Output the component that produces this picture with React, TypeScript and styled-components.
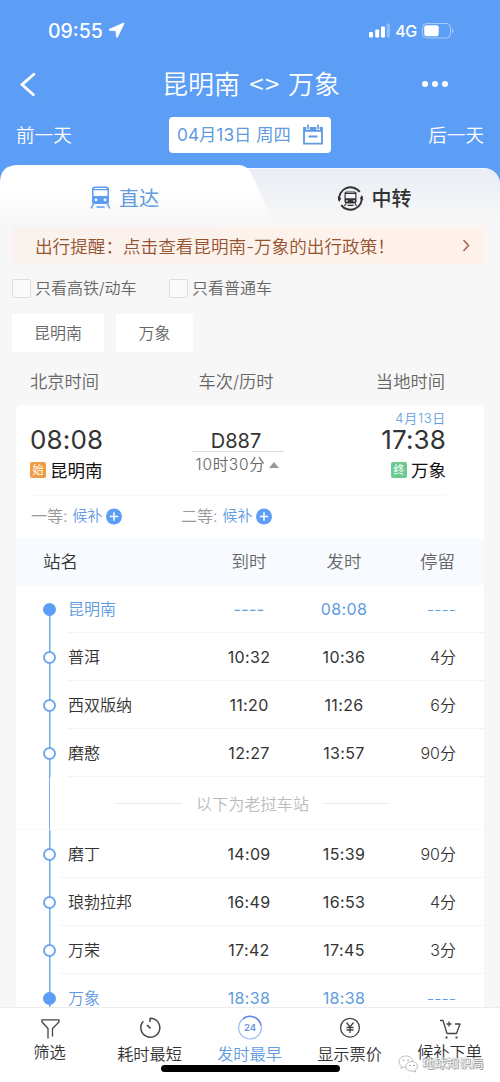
import React from "react";
import styled, { createGlobalStyle, css } from "styled-components";

const BLUE = "#5c9df5";
const LINK = "#5f9be0";

const GlobalStyle = createGlobalStyle`
  * { box-sizing: border-box; }
  body {
    margin: 0;
    background: #f7f7f7;
    font-family: Inter, "Noto Sans CJK SC", sans-serif;
    font-weight: 350;
    color: #333;
  }
`;

const Screen = styled.div`
  width: 500px;
  height: 1082px;
  display: flex;
  flex-direction: column;
  overflow: hidden;
  white-space: nowrap;
  background: #f7f7f7;
`;

const Hero = styled.header`
  height: 165px;
  flex: none;
  background: ${BLUE};
  color: #fff;
`;

const StatusBar = styled.div`
  height: 60px;
  padding: 1px 46px 0 48px;
  display: flex;
  align-items: center;
  justify-content: space-between;
`;

const StatusGroup = styled.div`
  display: flex;
  align-items: center;
  gap: 5px;
`;

const Clock = styled.span`
  font-size: 19.5px;
  font-weight: 500;
  line-height: 24px;
`;

const Network = styled.span`
  font-size: 16px;
  font-weight: 500;
  letter-spacing: -0.3px;
`;

const TitleBar = styled.div`
  height: 50px;
  padding: 0 52px 2px 19px;
  display: grid;
  grid-template-columns: 32px 1fr 26px;
  align-items: center;
`;

const Title = styled.h1`
  margin: 0 0 1px 29px;
  text-align: center;
  font-size: 26px;
  line-height: 34px;
  font-weight: 350;
`;

const Brackets = styled.span`
  font-family: "Noto Sans CJK SC", sans-serif;
  letter-spacing: 1.5px;
  margin: 0 0 0 2px;
`;

const Dots = styled.div`
  display: flex;
  gap: 4px;
  i { width: 6px; height: 6px; flex: none; border-radius: 50%; background: #fff; }
`;

const DateBar = styled.div`
  height: 50px;
  padding: 0 16px;
  display: flex;
  align-items: center;
  justify-content: space-between;
`;

const DayLink = styled.span`
  font-size: 18.6px;
  line-height: 26px;
`;

const DateButton = styled.button`
  width: 162px;
  height: 36px;
  padding: 0 7px 0 8px;
  margin: 0;
  border: 0;
  border-radius: 4px;
  background: #fff;
  color: ${LINK};
  font: 400 17.3px/36px Inter, "Noto Sans CJK SC", sans-serif;
  display: flex;
  align-items: center;
  justify-content: space-between;
`;

const Tabs = styled.nav`
  height: 62px;
  flex: none;
  display: grid;
  grid-template-columns: 250px 250px;
  background: linear-gradient(${BLUE} 30px, #f7f7f7 30px);
`;

const Tab = styled.div<{ $active?: boolean }>`
  display: flex;
  justify-content: center;
  gap: 8px;
  padding-top: 20px;
  font-size: 20px;
  line-height: 28px;
  color: #333;
  font-weight: 500;
  ${(p) =>
    p.$active
      ? css`
          width: 276px;
          z-index: 1;
          color: ${LINK};
          font-weight: 400;
          padding-right: 27px;
          background: linear-gradient(#fff 24px, #f7f7f7 55px);
          clip-path: path("M0 62V18Q0 0 18 0H238Q247 0 251 8L276 62Z");
        `
      : css`
          margin: 3px 0 0 -30px;
          padding-top: 16px;
          padding-left: 28px;
          border-top: 1px solid #f8faff;
          border-radius: 0 16px 0 0;
          background: linear-gradient(#e9edf5, #f7f7f7 52px);
        `}
`;

const Notice = styled.div`
  flex: none;
  height: 37px;
  margin: 0 15px 0 12px;
  padding: 0 15px 1px 23px;
  border-radius: 5px;
  background: linear-gradient(90deg, #faf2ee, #fff2ea);
  color: #96532f;
  font-size: 17.6px;
  display: flex;
  align-items: center;
  justify-content: space-between;
`;

const Filters = styled.div`
  flex: none;
  height: 48px;
  padding: 0 12px;
  display: flex;
  align-items: center;
`;

const Check = styled.label<{ $width: number }>`
  width: ${(p) => p.$width}px;
  display: flex;
  align-items: center;
  gap: 4px;
  font-size: 16px;
  line-height: 24px;
  color: #666;
  &::before {
    content: "";
    width: 17px;
    height: 17px;
    border: 1px solid #ddd;
    border-radius: 2px;
    background: #fafafa;
  }
`;

const Chips = styled.div`
  flex: none;
  display: flex;
  gap: 12px;
  padding: 2px 12px 0;
  height: 41px;
`;

const Chip = styled.div<{ $width: number }>`
  width: ${(p) => p.$width}px;
  height: 38px;
  background: #fff;
  color: #666;
  text-align: center;
  font-size: 16px;
  line-height: 38px;
`;

const Columns = styled.div`
  flex: none;
  height: 52px;
  padding: 5px 55px 0 30px;
  display: grid;
  grid-template-columns: 1fr 1fr 1fr;
  font-size: 17.3px;
  line-height: 48px;
  color: #666;
  span:nth-child(2) { text-align: center; padding-right: 3px; }
  span:nth-child(3) { text-align: right; }
`;

const Card = styled.main`
  flex: 1;
  min-height: 0;
  overflow: hidden;
  width: 468px;
  margin-left: 16px;
  border-radius: 6px 6px 0 0;
  background: #fff;
`;

const Trip = styled.section`
  height: 90px;
  padding: 0 38px 0 14px;
  display: grid;
  grid-template-columns: 150px 1fr 150px;
`;

const Endpoint = styled.div<{ $end?: boolean }>`
  display: flex;
  flex-direction: column;
  align-items: ${(p) => (p.$end ? "flex-end" : "flex-start")};
`;

const LocalDate = styled.div`
  height: 20px;
  padding-top: 4px;
  font-size: 13px;
  line-height: 19px;
  letter-spacing: 0.7px;
  font-weight: 350;
  color: ${LINK};
`;

const Time = styled.div`
  font-size: 26px;
  line-height: 30px;
  letter-spacing: 0.15px;
  font-weight: 400;
`;

const Place = styled.div`
  display: flex;
  align-items: center;
  gap: 4px;
  height: 29px;
  font-size: 17.5px;
  font-weight: 400;
  color: #111;
`;

const Badge = styled.span<{ $color: string }>`
  width: 16px;
  height: 16px;
  border-radius: 2px;
  background: ${(p) => p.$color};
  color: #fff;
  font-size: 11px;
  line-height: 16px;
  text-align: center;
`;

const TrainInfo = styled.div`
  justify-self: center;
  width: 92px;
  margin-right: 1px;
  padding-top: 24px;
`;

const TrainNo = styled.div`
  height: 23px;
  border-bottom: 1px solid #ddd;
  padding-right: 3px;
  text-align: center;
  font-size: 20px;
  line-height: 24px;
  font-weight: 400;
`;

const Duration = styled.div`
  display: flex;
  align-items: center;
  justify-content: center;
  gap: 4px;
  font-size: 15.5px;
  letter-spacing: 0.7px;
  line-height: 26px;
  color: #666;
  &::after {
    content: "";
    border: 5px solid transparent;
    border-top: 0;
    border-bottom: 6px solid #999;
  }
`;

const Seats = styled.div`
  height: 43px;
  margin: 0 38px 0 15px;
  border-top: 1px solid #f8f8f8;
  display: flex;
  align-items: center;
  padding-bottom: 2px;
`;

const Seat = styled.div`
  width: 150px;
  display: flex;
  align-items: center;
  font-size: 16px;
  line-height: 24px;
  color: #999;
`;

const Waitlist = styled.span`
  display: flex;
  align-items: center;
  gap: 3px;
  margin-left: 5px;
  font-size: 15px;
  color: ${LINK};
`;

const rowGrid = css`
  display: grid;
  grid-template-columns: 52px 133px 96px 94px 1fr;
  align-items: center;
`;

const TableHead = styled.div`
  ${rowGrid}
  height: 47px;
  background: #f7fbff;
  color: #666;
  font-size: 17.5px;
  line-height: 44px;
  span { text-align: center; }
  span:first-child { grid-column: 1 / 3; text-align: left; padding-left: 27px; color: #333; }
  span:last-child { text-align: right; padding-right: 29px; }
`;

const Stop = styled.div<{ $terminal?: boolean; $full?: boolean }>`
  ${rowGrid}
  height: 48px;
  font-size: 16px;
  line-height: 24px;
  color: ${(p) => (p.$terminal ? LINK : "#333")};
  background: linear-gradient(#f4f4f4, #f4f4f4) ${(p) => (p.$full ? 44 : 52)}px 47px / 100% 1px no-repeat;
`;

const Rail = styled.div<{ $first?: boolean }>`
  align-self: stretch;
  display: flex;
  align-items: center;
  padding-left: 27px;
  background: linear-gradient(#72a9ec, #72a9ec) 33px ${(p) => (p.$first ? "24px" : "0")} / 1.5px 100% no-repeat;
`;

const Node = styled.i<{ $solid?: boolean }>`
  width: 13px;
  height: 13px;
  border-radius: 50%;
  border: 2px solid #72a9ec;
  background: ${(p) => (p.$solid ? BLUE : "#fff")};
  ${(p) => p.$solid && `border-color: ${BLUE};`}
`;

const Cell = styled.span`
  text-align: center;
  letter-spacing: 0.35px;
  font-weight: 380;
`;

const Stay = styled.span`
  text-align: right;
  padding-right: 28px;
`;

const Border = styled.div`
  height: 53px;
  display: flex;
  align-items: center;
  background: linear-gradient(#72a9ec, #72a9ec) 33px 0 / 1px 100% no-repeat;
  border-bottom: 1px solid #fafafa;
  padding-left: 100px;
  gap: 14px;
  color: #bbb;
  font-size: 16px;
  letter-spacing: 0.15px;
  &::before, &::after {
    content: "";
    width: 66px;
    height: 1px;
    background: #eaeaea;
  }
`;

const BottomBar = styled.footer`
  position: relative;
  flex: none;
  height: 75px;
  border-top: 1px solid #ececec;
  background: #fff;
  display: grid;
  grid-template-columns: repeat(5, 100px);
`;

const Action = styled.div<{ $active?: boolean; $lift?: number }>`
  display: flex;
  flex-direction: column;
  align-items: center;
  padding: 7px 1px 0 0;
  font-size: 16.2px;
  line-height: 24px;
  color: ${(p) => (p.$active ? LINK : "#333")};
  svg { flex: none; }
  span { margin-top: ${(p) => 1 - (p.$lift || 0)}px; }
`;

const HomeIndicator = styled.div`
  position: absolute;
  left: 161px;
  bottom: 10px;
  width: 179px;
  height: 7px;
  border-radius: 4px;
  background: #000;
`;

const Watermark = styled.div`
  position: absolute;
  left: 398px;
  bottom: 9px;
  display: flex;
  align-items: center;
  gap: 3px;
  font-size: 12.3px;
  line-height: 18px;
  color: #fff;
  text-shadow: 1px 1px 0 #999, 0 0 1px #777, 0 0 1px #999;
`;

const BackIcon = () => (
  <svg width="18" height="26" viewBox="0 0 18 26" fill="none" stroke="#fff" strokeWidth="2.8">
    <path d="M15.7 2.500 3 13.600 15.200 24.500" />
  </svg>
);

const LocationIcon = () => (
  <svg width="17" height="17" viewBox="0 0 17 17" fill="#fff" stroke="#fff" strokeWidth=".8" strokeLinejoin="round">
    <path d="M15.600 1 1.200 7.400q-.7.500.1.900L8 8.800l.5 6.400q.4.800.9 0L16.100 1.500q.1-.7-.5-.5Z" />
  </svg>
);

const SignalIcon = () => (
  <svg width="23" height="15" viewBox="0 0 23 15" fill="#fff">
    <rect x="2" y="9" width="4" height="5.500" rx="1" />
    <rect x="8.200" y="6.500" width="4" height="8" rx="1" />
    <rect x="14" y="3.500" width="4" height="11" rx="1" />
    <rect x="19.500" y="0.500" width="3.500" height="14" rx="1" opacity=".3" />
  </svg>
);

const BatteryIcon = () => (
  <svg width="32" height="16" viewBox="0 0 32 16">
    <rect x=".5" y=".5" width="28" height="14.500" rx="4" fill="none" stroke="#fff" opacity=".45" />
    <rect x="2.200" y="2.300" width="14.500" height="11" rx="2.200" fill="#fff" />
    <path d="M30 5.500c2 .8 2 4 0 4.700Z" fill="#fff" opacity=".45" />
  </svg>
);

const CalendarIcon = () => (
  <svg width="22" height="22" viewBox="0 0 22 22" fill="none" stroke={LINK}>
    <path d="M2 4h18v15.700H2Z" strokeWidth="1.800" />
    <path d="M2 4h18v3.800H2Z" fill={LINK} stroke="none" />
    <path d="M6 1v5M16 1v5" stroke="#fff" strokeWidth="3.400" />
    <path d="M6 .5v4.700M16 .5v4.700" strokeWidth="1.700" />
    <path d="M6.500 12.500h9" strokeWidth="2" />
  </svg>
);

const TrainIcon = () => (
  <svg width="21" height="24" viewBox="0 0 21 24" fill={BLUE}>
    <path fillRule="evenodd" d="M5 1.500h11q3 0 3 3V17q0 2-2 2H4q-2 0-2-2V4.500q0-3 3-3ZM3.500 5.300V10q0 1 1 1h12q1 0 1-1V5.300ZM4 4h13q-.4-1-1.400-1H5.400Q4.400 3 4 4Z" />
    <circle cx="6" cy="14.800" r="1.400" fill="#fff" />
    <circle cx="15" cy="14.800" r="1.400" fill="#fff" />
    <path d="m3.500 19-2.300 4.300M17.500 19l2.300 4.300" stroke={BLUE} strokeWidth="1.500" />
    <path d="M6.500 22h8" stroke={BLUE} strokeWidth="1.400" />
  </svg>
);

const TransferIcon = () => (
  <svg width="27" height="27" viewBox="0 0 27 27" fill="none" stroke="#333" strokeWidth="2">
    <path d="M2.200 15.500A11.500 11.500 0 0 1 22.800 6.900" />
    <path d="M24.800 11.500A11.500 11.500 0 0 1 4.200 20.100" />
    <path d="M.6 12.300 4.300 13l-2 4ZM26.400 14.700l-3.700-.7 2-4Z" fill="#333" stroke="none" />
    <path fill="#333" stroke="none" fillRule="evenodd" d="M9.500 6.500h8q2 0 2 2v8q0 2-2 2h-8q-2 0-2-2v-8q0-2 2-2ZM8.700 9v4.200h9.600V9Zm.8-1.200h8v-.5h-8Z" />
    <circle cx="10" cy="15.800" r=".9" fill="#eef1f6" stroke="none" />
    <circle cx="17" cy="15.800" r=".9" fill="#eef1f6" stroke="none" />
    <path d="m9 18.500-1.500 2.500M18 18.500l1.500 2.500M10.500 20.300h6" strokeWidth="1.200" />
  </svg>
);

const ChevronIcon = () => (
  <svg width="8" height="13" viewBox="0 0 8 13" fill="none" stroke="#a06848" strokeWidth="1.500">
    <path d="m1.500 1 5 5.500-5 5.500" />
  </svg>
);

const PlusIcon = () => (
  <svg width="17" height="17" viewBox="0 0 17 17">
    <circle cx="8" cy="8.500" r="8" fill={BLUE} />
    <path d="M8 4.300v8.400M3.800 8.500h8.400" stroke="#fff" strokeWidth="1.500" />
  </svg>
);

const iconProps = { width: 26, height: 26, viewBox: "0 0 26 26", fill: "none", stroke: "#444", strokeWidth: 1.3 };

const FunnelIcon = () => (
  <svg {...iconProps}>
    <path d="M11 23.500V13.500L5 7V4.800h17V7L15.500 13.500v8" strokeLinejoin="round" />
  </svg>
);

const TimerIcon = () => (
  <svg {...iconProps}>
    <path d="M13 3.200a9.500 9.500 0 1 1-6.700 3.100M13 3v4" strokeWidth="1.500" />
    <path d="m10 10 3.500 3.300" strokeWidth="1.700" />
  </svg>
);

const Clock24Icon = () => (
  <svg {...iconProps}>
    <circle cx="13" cy="12.700" r="11.300" stroke="#9bb8f3" strokeWidth="1.200" />
    <path d="M6 3.800a11.300 11.300 0 0 1 18 6.500" stroke="#668be5" strokeWidth="1.500" />
    <text x="13" y="16.200" textAnchor="middle" fontSize="9.500" fontWeight="600" fill="#6d94df" stroke="none">24</text>
  </svg>
);

const YenIcon = () => (
  <svg {...iconProps}>
    <circle cx="13" cy="12.700" r="9.400" />
    <path d="m9.500 7.500 3.500 4.500 3.500-4.500M13 12v6M9.500 12.500h7M9.500 15h7" />
  </svg>
);

const CartIcon = () => (
  <svg {...iconProps}>
    <path d="M3 5.500h3l4 13h9.500L23 9h-5M9.500 9h5M12 6.500v5" strokeLinejoin="round" />
    <path d="M8.500 22.500h2M18.500 22.500h2" strokeWidth="2" />
  </svg>
);

const WeChatIcon = () => (
  <svg width="21" height="18" viewBox="0 0 21 18" fill="#fff" stroke="#aaa" strokeWidth=".8">
    <path d="M8 1C4 1 1 3.500 1 6.700c0 1.800 1 3.400 2.500 4.400L3 13.400l2.600-1.300c4 1 9-1 9.200-5.400C14.800 3.500 12 1 8 1Z" />
    <path d="M13.800 6.500c-3.500 0-6 2.200-6 4.900 0 3.600 4 5.500 7.700 4.600l2.200 1.100-.5-1.900c3.800-2.700 2.500-8.700-3.400-8.700Z" />
    <path d="M5.500 4.700v1M10 4.700v1M12 10v1M16 10v1" stroke="#888" strokeWidth="1.400" />
  </svg>
);

type StopData = { name: string; arrive: string; depart: string; stay: string; terminal?: boolean; first?: boolean; full?: boolean };

const chinaStops: StopData[] = [
  { name: "昆明南", arrive: "----", depart: "08:08", stay: "----", terminal: true, first: true },
  { name: "普洱", arrive: "10:32", depart: "10:36", stay: "4分" },
  { name: "西双版纳", arrive: "11:20", depart: "11:26", stay: "6分" },
  { name: "磨憨", arrive: "12:27", depart: "13:57", stay: "90分" },
];

const laosStops: StopData[] = [
  { name: "磨丁", arrive: "14:09", depart: "15:39", stay: "90分", full: true },
  { name: "琅勃拉邦", arrive: "16:49", depart: "16:53", stay: "4分", full: true },
  { name: "万荣", arrive: "17:42", depart: "17:45", stay: "3分", full: true },
  { name: "万象", arrive: "18:38", depart: "18:38", stay: "----", terminal: true },
];

const StopRow = ({ stop }: { stop: StopData }) => (
  <Stop $terminal={stop.terminal} $full={stop.full}>
    <Rail $first={stop.first}>
      <Node $solid={stop.terminal} />
    </Rail>
    <span>{stop.name}</span>
    <Cell>{stop.arrive}</Cell>
    <Cell>{stop.depart}</Cell>
    <Stay>{stop.stay}</Stay>
  </Stop>
);

export default function App() {
  return (
    <Screen>
      <GlobalStyle />
      <Hero>
        <StatusBar>
          <StatusGroup>
            <Clock>09:55</Clock>
            <LocationIcon />
          </StatusGroup>
          <StatusGroup>
            <SignalIcon />
            <Network>4G</Network>
            <BatteryIcon />
          </StatusGroup>
        </StatusBar>
        <TitleBar>
          <BackIcon />
          <Title>昆明南 <Brackets>&lt;&gt;</Brackets> 万象</Title>
          <Dots><i /><i /><i /></Dots>
        </TitleBar>
        <DateBar>
          <DayLink>前一天</DayLink>
          <DateButton>04月13日 周四<CalendarIcon /></DateButton>
          <DayLink>后一天</DayLink>
        </DateBar>
      </Hero>
      <Tabs>
        <Tab $active><TrainIcon />直达</Tab>
        <Tab><TransferIcon />中转</Tab>
      </Tabs>
      <Notice>
        <span>出行提醒：点击查看昆明南-万象的出行政策！</span>
        <ChevronIcon />
      </Notice>
      <Filters>
        <Check $width={157}>只看高铁/动车</Check>
        <Check $width={120}>只看普通车</Check>
      </Filters>
      <Chips>
        <Chip $width={92}>昆明南</Chip>
        <Chip $width={77}>万象</Chip>
      </Chips>
      <Columns>
        <span>北京时间</span>
        <span>车次/历时</span>
        <span>当地时间</span>
      </Columns>
      <Card>
        <Trip>
          <Endpoint>
            <LocalDate />
            <Time>08:08</Time>
            <Place><Badge $color="#ee9d45">始</Badge>昆明南</Place>
          </Endpoint>
          <TrainInfo>
            <TrainNo>D887</TrainNo>
            <Duration>10时30分</Duration>
          </TrainInfo>
          <Endpoint $end>
            <LocalDate>4月13日</LocalDate>
            <Time>17:38</Time>
            <Place><Badge $color="#6aca91">终</Badge>万象</Place>
          </Endpoint>
        </Trip>
        <Seats>
          <Seat>一等:<Waitlist>候补<PlusIcon /></Waitlist></Seat>
          <Seat>二等:<Waitlist>候补<PlusIcon /></Waitlist></Seat>
        </Seats>
        <TableHead>
          <span>站名</span>
          <span>到时</span>
          <span>发时</span>
          <span>停留</span>
        </TableHead>
        {chinaStops.map((s) => <StopRow key={s.name} stop={s} />)}
        <Border>以下为老挝车站</Border>
        {laosStops.map((s) => <StopRow key={s.name} stop={s} />)}
      </Card>
      <BottomBar>
        <Action $lift={2}><FunnelIcon /><span>筛选</span></Action>
        <Action><TimerIcon /><span>耗时最短</span></Action>
        <Action $active><Clock24Icon /><span>发时最早</span></Action>
        <Action><YenIcon /><span>显示票价</span></Action>
        <Action $lift={2}><CartIcon /><span>候补下单</span></Action>
        <HomeIndicator />
        <Watermark><WeChatIcon />地球知识局</Watermark>
      </BottomBar>
    </Screen>
  );
}
